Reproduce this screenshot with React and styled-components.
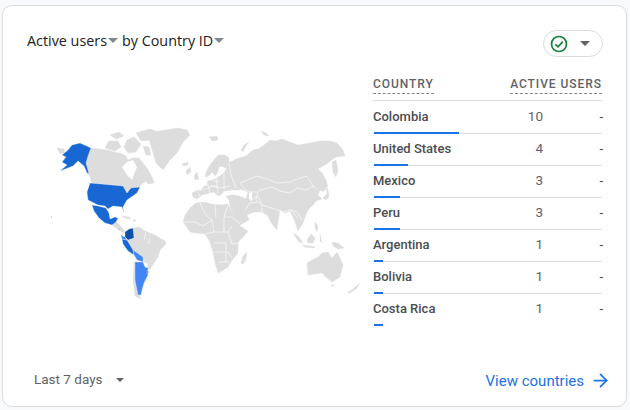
import React from "react";
import styled, { createGlobalStyle } from "styled-components";
import { ArrowRight } from "lucide-react";

const countries = [
  { name: "Colombia", users: 10 },
  { name: "United States", users: 4 },
  { name: "Mexico", users: 3 },
  { name: "Peru", users: 3 },
  { name: "Argentina", users: 1 },
  { name: "Bolivia", users: 1 },
  { name: "Costa Rica", users: 1 },
];

const GRAY = "#dddddd";
const landShapes = [
  // north america
  "M91 148 100 149 107 150 114 152 120 153 126 156 128 160 133 158 139 158 143 163 147 168 150 173 153 179 154 183 148 184 146 181 142 184 139 188 134 190 127 193 123 186 92 183 89 174 85 163Z",
  "M105 148 109 141 118 141 121 147 115 151Z M124 147 127 140 134 137 141 144 136 152 128 153Z M136 133 150 129 158 132 151 140 141 141Z M110 135 119 132 124 136 116 139Z M143 146 149 147 151 155 146 155Z",
  "M148 133 165 130 178 128 187 130 190 135 183 142 177 153 170 160 163 170 156 163 153 153 150 143Z",
  "M182 164 188 162 188 165 184 166Z M57 148 64 149 65 153 60 154Z",
  // central america and caribbean
  "M110 222 116 221 119 224 122 228 125 232 123 233 118 229 113 226Z",
  "M122 216 129 217 131 219 125 218Z M132 220 136 220 135 222Z",
  // south america
  "M133 228 139 227 145 231 155 235 165 241 166 244 160 250 158 257 154 263 150 269 147 270 148 264 143 262 143 257 133 250 127 240 134 238Z",
  "M134 262 133 280 135 296 141 299 139 295 137 280 137 262Z",
  // europe
  "M193 197 192 193 198 190 201 191 204 186 207 186 207 181 213 180 218 177 223 174 226 170 228 162 232 162 232 180 240 190 232 190 224 191 222 194 218 196 214 192 210 193 206 194 202 195 197 199Z",
  "M205 177 206 172 210 165 214 160 218 155 225 155 229 158 229 165 225 168 222 166 219 167 218 172 215 176 212 172 209 176Z",
  "M186 171 190 167 191 172 187 175Z M194 176 197 172 199 179 195 180Z",
  "M209 137 217 136 218 140 212 141Z M261 131 266 133 269 136 264 135Z M241 150 244 145 249 142 246 146 243 152Z",
  // asia
  "M225 172 229 163 236 159 246 156 253 150 258 149 264 145 270 140 276 141 282 139 290 142 298 145 310 143 320 141 330 141 337 143 343 150 345 156 336 157 333 159 328 163 323 166 318 169 322 173 326 180 328 186 323 192 320 190 318 195 322 199 316 201 313 205 308 210 305 217 303 223 298 231 294 219 290 211 285 213 280 210 278 222 277 230 272 224 267 215 262 212 254 212 247 215 249 220 242 224 237 226 234 216 230 206 229 200 226 196 232 195 240 196 246 199 248 192 243 190 236 188 229 182Z",
  "M332 162 336 160 338 170 336 177 333 172Z",
  "M326 186 328 190 329 197 326 200 323 198 327 194Z",
  // africa, australia and islands
  "M183 222 185 215 190 208 196 203 204 202 212 204 222 205 228 204 232 212 236 220 240 226 248 231 244 236 238 242 238 253 232 260 228 267 218 273 215 263 213 252 210 242 205 234 196 233 190 232Z",
  "M243 256 247 252 246 259 243 264 241 263Z",
  "M307 263 312 260 318 257 322 253 328 252 332 258 337 252 340 258 343 265 340 277 332 282 326 277 322 273 308 275Z",
  "M293 233 298 236 303 243 299 242Z M307 240 311 234 315 238 313 243 308 243Z M303 245 315 247 314 248 304 247Z M320 234 322 243 320 241Z M332 242 338 243 344 248 338 249 333 246Z",
  "M315 222 318 226 317 232 315 228Z M347 293 353 289 360 283 356 289 350 293Z M331 285 334 285 333 287Z",
];
const borderLines = [
  // russia, mongolia, china
  "M240 183 252 178 257 176 270 180 277 183 290 182 300 178 307 176 313 186 306 190 297 188 290 193 280 191 272 187 260 190 258 192",
  "M258 192 256 200 262 205 275 209 283 212 291 210 298 218",
  "M240 183 245 190 250 192 258 192",
  "M250 201 258 196 262 205 262 213 M245 210 250 203 258 202 M291 210 297 212 302 220 M313 186 318 190",
  // europe
  "M229 163 231 175 236 188 M203 190 212 186 220 188 230 186 M207 181 210 193 M216 178 218 194 M224 174 224 190 M197 191 200 196 M210 186 218 186 M213 181 220 182",
  // africa
  "M183 222 195 222 203 226 212 220 M200 203 205 214 212 220 M215 204 216 218 M228 205 224 217 232 217 240 224 M212 220 214 232 228 232 232 226 M224 217 224 232 M205 234 214 232 M214 243 227 243 M228 232 232 244 238 243 M214 252 228 252 232 258 M226 244 226 262 M219 262 229 262",
  // americas
  "M92 205 99 204 106 208 M146 232 144 240 M150 238 148 244 M143 262 148 264",
];
const states = [
  { color: "#1967d2", d: "M72 145 80 143 91 148 88 156 86 163 89 174 87 173 84 166 78 161 73 166 60 171 67 165 62 162 66 157 62 155 68 150Z" },
  { color: "#1967d2", d: "M90 183 123 186 127 193 131 188 140 187 137 193 127 200 123 207 124 213 122 207 113 206 108 209 105 206 98 205 88 200 87 192Z" },
  { color: "#1967d2", d: "M92 205 98 206 106 208 109 213 110 219 115 217 118 218 116 222 112 225 105 223 99 218 94 211Z" },
  { color: "#1967d2", d: "M122 239 127 240 133 250 134 255 128 251 123 244Z" },
  { color: "#0f4fa8", d: "M125 232 129 229 133 228 134 238 128 240 125 237Z" },
  { color: "#4285f4", d: "M121 235 125 237 127 240 122 239Z" },
  { color: "#4285f4", d: "M133 250 143 257 143 262 137 260 134 255Z" },
  { color: "#4285f4", d: "M135 262 143 262 145 267 148 268 148 275 144 283 142 290 141 295 138 295 135 280Z" },
  { color: "#4285f4", d: "M147 270 149 272 147 274Z" },
  { color: "#4285f4", d: "M118 228 120 229 119 230Z" },
  { color: "#4285f4", d: "M51 216 52 217 51 218Z" },
];

const WorldMap = () => (
  <MapSvg viewBox="25 120 340 190" aria-hidden="true">
    {landShapes.map((d) => (
      <path key={d} d={d} fill={GRAY} stroke={GRAY} strokeWidth="0.4" />
    ))}
    {borderLines.map((d) => (
      <path key={d} d={d} fill="none" stroke="#fff" strokeWidth="0.7" opacity="0.85" />
    ))}
    {/* hudson bay and caspian */}
    <path d="M122 167 127 162 133 160 137 167 132 180 127 175Z M249 193 252 192 252 201 249 199Z" fill="#fff" />
    {states.map((s) => (
      <path key={s.d} d={s.d} fill={s.color} stroke="#fff" strokeWidth="0.3" />
    ))}
  </MapSvg>
);

export default function App() {
  return (
    <>
      <GlobalStyle />
      <Card>
        <Header>
          <Title>
            Active users
            <Caret $margin="1px 4px 0 1px" />
            by Country ID
            <Caret $margin="1px 0 0 1px" />
          </Title>
          <StatusChip>
            <svg width="18" height="18" viewBox="0 0 18 18" aria-hidden="true">
              <circle cx="9" cy="9" r="7.5" fill="none" stroke="#188038" strokeWidth="1.7" />
              <path d="M5.3 9.3 8 11.9 12.8 6.6" fill="none" stroke="#188038" strokeWidth="1.7" />
            </svg>
            <Caret $margin="0" $dark />
          </StatusChip>
        </Header>
        <Body>
          <WorldMap />
          <Table>
            <HeadRow>
              <HeadCell>COUNTRY</HeadCell>
              <HeadCell>ACTIVE USERS</HeadCell>
            </HeadRow>
            {countries.map((c, i) => (
              <Row key={c.name} $last={i === countries.length - 1}>
                <Name>{c.name}</Name>
                <Value>{c.users}</Value>
                <Change>-</Change>
                <Bar style={{ width: c.users * 8.5 }} />
              </Row>
            ))}
          </Table>
        </Body>
        <Footer>
          <Range>
            Last 7 days
            <SmallCaret />
          </Range>
          <ViewLink>
            View countries
            <ArrowRight size={21} strokeWidth={2} />
          </ViewLink>
        </Footer>
      </Card>
    </>
  );
}

const GlobalStyle = createGlobalStyle`
  html, body {
    margin: 0;
    height: 100%;
    background: #f8f9fa;
    font-family: Roboto, "Liberation Sans", sans-serif;
  }
`;

const Card = styled.div`
  box-sizing: border-box;
  width: 625px;
  height: 402px;
  margin: 5px 0 0 2px;
  padding: 24px 24px 15px 24px;
  display: flex;
  flex-direction: column;
  background: #fff;
  border: 1px solid #dadce0;
  border-radius: 10px;
`;

const Header = styled.div`
  display: flex;
  justify-content: space-between;
  align-items: flex-start;
  height: 46px;
`;

const Title = styled.div`
  display: flex;
  align-items: center;
  height: 20px;
  font-family: "Open Sans", sans-serif;
  font-size: 14.35px;
  color: #202124;
`;

const Caret = styled.span`
  flex: none;
  width: 0;
  height: 0;
  margin: ${(p) => p.$margin};
  border-left: 5px solid transparent;
  border-right: 5px solid transparent;
  border-top: 5px solid ${(p) => (p.$dark ? "#5f6368" : "#80868b")};
`;

const SmallCaret = styled.span`
  width: 0;
  height: 0;
  margin: 1px 0 0 13px;
  border-left: 4px solid transparent;
  border-right: 4px solid transparent;
  border-top: 4px solid #5f6368;
`;

const StatusChip = styled.div`
  box-sizing: border-box;
  width: 60px;
  height: 27px;
  margin-right: -1px;
  padding: 0 12px 0 6px;
  display: flex;
  align-items: center;
  justify-content: space-between;
  border: 1px solid #dadce0;
  border-radius: 14px;
`;

const Body = styled.div`
  flex: 1;
  display: flex;
  align-items: flex-start;
`;

const MapSvg = styled.svg`
  flex: none;
  width: 340px;
  height: 190px;
  margin: 44px 8px 0 -2px;
`;

const Table = styled.div`
  width: 229px;
`;

const HeadRow = styled.div`
  display: flex;
  justify-content: space-between;
  align-items: flex-start;
  height: 24px;
  margin-bottom: 1px;
  border-bottom: 1px solid #dadce0;
`;

const HeadCell = styled.span`
  height: 17px;
  line-height: 16px;
  font-size: 12px;
  font-weight: 500;
  letter-spacing: 0.95px;
  color: #5f6368;
  border-bottom: 1px dashed #80868b;
`;

const Row = styled.div`
  position: relative;
  box-sizing: border-box;
  height: 32px;
  display: flex;
  align-items: center;
  padding-bottom: 2px;
  font-size: 13px;
  color: #3c4043;
  border-bottom: 1px solid ${(p) => (p.$last ? "transparent" : "#dadce0")};
`;

const Name = styled.span`
  width: 120px;
  font-weight: 500;
  color: #4a4d51;
`;

const Value = styled.span`
  width: 50px;
  margin-top: -1px;
  text-align: right;
  font-size: 13.5px;
  color: #5f6368;
`;

const Change = styled.span`
  flex: 1;
  text-align: right;
  margin-right: -1px;
`;

const Bar = styled.i`
  position: absolute;
  left: 1px;
  bottom: -1px;
  height: 2px;
  background: #1a73e8;
`;

const Footer = styled.div`
  display: flex;
  justify-content: space-between;
  align-items: center;
  height: 24px;
  padding: 0 0 0 7px;
`;

const Range = styled.div`
  display: flex;
  align-items: center;
  font-size: 13.5px;
  color: #5f6368;
`;

const ViewLink = styled.a`
  display: flex;
  align-items: center;
  gap: 6px;
  margin: 3px -9px 0 0;
  font-size: 15px;
  color: #1a73e8;
`;
